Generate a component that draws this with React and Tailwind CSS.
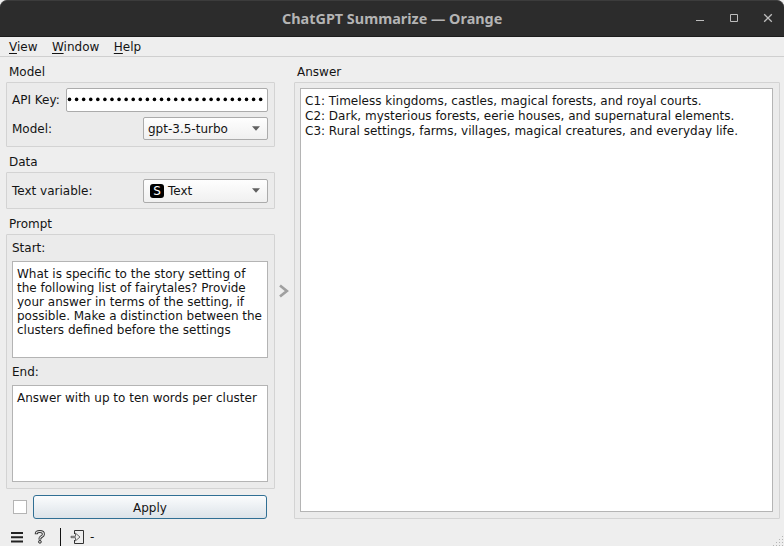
const border = "border border-[#d3d3d3] bg-[#ebebeb]";

function Group({ title, className = "", children }) {
  return (
    <section>
      <h2 className="h-[20px] pl-[3px] leading-[20px]">{title}</h2>
      <div className={`${border} rounded-[1px] ${className}`}>{children}</div>
    </section>
  );
}

function Combo({ className = "", children }) {
  return (
    <div className={`flex w-[125px] shrink-0 items-center rounded-[2px] border border-[#ababab] bg-linear-to-b from-[#fefefe] to-[#f0f0f0] pr-[7px] pl-1 ${className}`}>
      {children}
      <svg className="ml-auto" width="8" height="5" viewBox="0 0 8 5">
        <path d="M0 0.3H8L4 4.7Z" fill="#606060" />
      </svg>
    </div>
  );
}

function TextBox({ className = "", children }) {
  return (
    <div className={`border border-[#b4b4b4] bg-white pl-1 whitespace-pre ${className}`}>{children}</div>
  );
}

function TitleBar() {
  return (
    <div className="bg-[#eeeeee]">
      <header className="flex h-[37px] items-center rounded-t-[7px] border-t border-b border-t-[#3c3c3c] border-b-[#1c1c1c] bg-[#2c2c2c] text-[#b4b4b4]">
        <div className="w-[282px]" />
        <h1 className="w-[411px] pt-px font-['Noto_Sans','Open_Sans',sans-serif] text-[14.4px] leading-[20px] font-bold whitespace-nowrap">
          ChatGPT Summarize — Orange
        </h1>
        <svg width="91" height="35" viewBox="693 1 91 35" fill="none" stroke="#bdbdbd">
          <path d="M696 20.5H704" />
          <path d="M730.5 14.5H737.5V21.5H730.5Z" />
          <path d="M764.2 14.2L771.8 21.8M771.8 14.2L764.2 21.8" strokeWidth="1.3" />
        </svg>
      </header>
    </div>
  );
}

export default function App() {
  return (
    <main className="flex h-[546px] w-[784px] flex-col overflow-hidden bg-[#eeeeee] font-['DejaVu_Sans',sans-serif] text-[12px] text-[#141414]">
      <TitleBar />
      <nav className="flex h-[20px] gap-[14.5px] border-b border-[#cfcfcf] pl-[9px] leading-[20px]">
        {["View", "Window", "Help"].map((item) => (
          <span key={item}>
            <span className="underline underline-offset-2">{item[0]}</span>
            {item.slice(1)}
          </span>
        ))}
      </nav>

      <div className="flex h-[463px] pt-[5px] pl-[6px]">
        <div className="w-[269px]">
          <Group title="Model" className="h-[65px] pt-[5px] pr-[6px] pl-[5px]">
            <div className="flex h-[24px] items-center">
              <span className="w-[54px]">API Key:</span>
              <div className="flex h-[24px] w-[202px] items-center overflow-hidden rounded-[2px] border border-[#ababab] bg-white">
                <svg width="200" height="22" fill="#000">
                  {Array.from({ length: 28 }, (_, i) => (
                    <circle key={i} cx={2.5 + i * 7.08} cy="10.4" r="1.8" />
                  ))}
                </svg>
              </div>
            </div>
            <div className="mt-[5px] flex h-[23px] items-center justify-between">
              <span>Model:</span>
              <Combo className="h-[23px]">gpt-3.5-turbo</Combo>
            </div>
          </Group>
          <div className="h-[5px]" />
          <Group title="Data" className="flex h-[37px] items-center justify-between pr-[6px] pl-[5px]">
            <span>Text variable:</span>
            <Combo className="h-[24px]">
              <span className="mr-[4px] ml-[2px] flex h-[14px] w-[14px] items-center justify-center rounded-[3px] bg-black text-[12px] leading-none text-white">S</span>
              Text
            </Combo>
          </Group>
          <div className="h-[5px]" />
          <Group title="Prompt" className="h-[255px] pr-[6px] pl-[5px]">
            <div className="h-[26px] leading-[27px]">Start:</div>
            <TextBox className="h-[97px] pt-[5px] leading-[14px]">
              {"What is specific to the story setting of\nthe following list of fairytales? Provide\nyour answer in terms of the setting, if\npossible. Make a distinction between the\nclusters defined before the settings"}
            </TextBox>
            <div className="h-[27px] leading-[29px]">End:</div>
            <TextBox className="h-[97px] pt-[5px] leading-[14px]">Answer with up to ten words per cluster</TextBox>
          </Group>
          <div className="mt-[6px] flex items-center pl-[7px]">
            <span className="h-[14px] w-[14px] border border-[#b4b4b4] bg-white" />
            <button className="ml-[6px] h-[24px] w-[234px] rounded-[3px] border border-[#306f94] bg-linear-to-b from-[#fbfcfd] to-[#dce3e9] pt-[2px]">Apply</button>
          </div>
        </div>

        <div className="flex w-[19px] pt-[222px] pl-[3px]">
          <svg width="12" height="14" viewBox="0 0 12 14" fill="none" stroke="#a0a0a0" strokeWidth="2.7">
            <path d="M2 1.5L8.8 7L2 12.5" />
          </svg>
        </div>

        <div className="w-[486px]">
          <Group title="Answer" className="h-[437px] px-[5px] pt-[5px]">
            <TextBox className="h-[424px] w-[473px] pt-[5px] leading-[15px]">
              {"C1: Timeless kingdoms, castles, magical forests, and royal courts.\nC2: Dark, mysterious forests, eerie houses, and supernatural elements.\nC3: Rural settings, farms, villages, magical creatures, and everyday life."}
            </TextBox>
          </Group>
        </div>
      </div>

      <footer className="flex h-[26px] items-center">
        <svg width="88" height="26" viewBox="0 520 88 26" fill="none">
          <path d="M11 533H23M11 537.2H23M11 541.4H23" stroke="#222" strokeWidth="2" />
          <path d="M36.2 534.2C36.2 531.9 37.6 531.5 39.8 531.5C42.2 531.5 43.4 532.5 43.4 534.2C43.4 536.8 39.8 536.3 39.8 539.4" stroke="#333" strokeWidth="3" />
          <path d="M36.2 533.4C36.4 531.9 37.6 531.5 39.8 531.5C42.2 531.5 43.4 532.5 43.4 534.2C43.4 536.8 39.8 536.3 39.8 538.8" stroke="#e6e6e6" strokeWidth="1.2" />
          <circle cx="39.9" cy="541.8" r="1.4" fill="#ccc" stroke="#333" />
          <path d="M60.5 528V546" stroke="#111" />
          <path d="M74.5 534V530.5H83.5V543.5H74.5V540" stroke="#333" />
          <path d="M71 536.3H75.5V533.2L80 537L75.5 540.8V537.7H71Z" fill="#eee" stroke="#555" strokeWidth=".9" />
        </svg>
        <span className="ml-[2px] pt-[7px]">-</span>
        <svg className="ml-auto" width="12" height="26" viewBox="0 0 12 26" fill="#b5b5b5">
          <path d="M10 16h1v1h-1zM7 19h1v1h-1zM10 19h1v1h-1zM4 22h1v1h-1zM7 22h1v1h-1zM10 22h1v1h-1zM1 25h1v1h-1zM4 25h1v1h-1zM7 25h1v1h-1zM10 25h1v1h-1z" />
        </svg>
      </footer>
    </main>
  );
}
